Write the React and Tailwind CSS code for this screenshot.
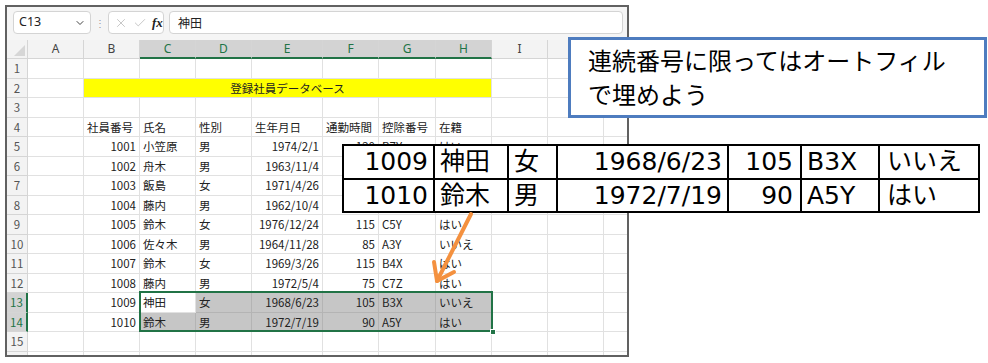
import React from 'react';
import { ChevronDown, X, Check } from 'lucide-react';

const WIDTHS = ['w-[56px]', 'w-[56px]', 'w-[56px]', 'w-[56px]', 'w-[71px]', 'w-[56px]', 'w-[57px]', 'w-[56px]', 'w-[56px]', 'w-[56px]'];
const LETTERS = ['A', 'B', 'C', 'D', 'E', 'F', 'G', 'H', 'I', 'J'];
// right aligned columns (B, E, F)
const RIGHT = [false, true, false, false, true, true, false, false, false, false];

const data = {
  4: ['社員番号', '氏名', '性別', '生年月日', '通勤時間', '控除番号', '在籍'],
  5: [1001, '小笠原', '男', '1974/2/1', 120, 'B7Y', 'はい'],
  6: [1002, '舟木', '男', '1963/11/4', 90, 'A2X', 'いいえ'],
  7: [1003, '飯島', '女', '1971/4/26', 60, 'C3Y', 'はい'],
  8: [1004, '藤内', '男', '1962/10/4', 100, 'B1Z', 'はい'],
  9: [1005, '鈴木', '女', '1976/12/24', 115, 'C5Y', 'はい'],
  10: [1006, '佐々木', '男', '1964/11/28', 85, 'A3Y', 'いいえ'],
  11: [1007, '鈴木', '女', '1969/3/26', 115, 'B4X', 'はい'],
  12: [1008, '藤内', '男', '1972/5/4', 75, 'C7Z', 'はい'],
  13: [1009, '神田', '女', '1968/6/23', 105, 'B3X', 'いいえ'],
  14: [1010, '鈴木', '男', '1972/7/19', 90, 'A5Y', 'はい'],
};

const overlay = [
  ['1009', '神田', '女', '1968/6/23', '105', 'B3X', 'いいえ'],
  ['1010', '鈴木', '男', '1972/7/19', '90', 'A5Y', 'はい'],
];
const OV_W = ['w-[89px] text-right pr-[5px]', 'w-[72px] pl-[5px]', 'w-[47px] pl-[5px]', 'w-[169px] text-right pr-[5px]', 'w-[71px] text-right pr-[7px]', 'w-[76px] pl-[5px]', 'w-[98px] pl-[7px]'];

function RowHeader({ n }) {
  const sel = n === 13 || n === 14;
  return (
    <div
      className={
        'w-[21px] shrink-0 border-b border-[#d5d5d5] text-center ' +
        (sel ? 'bg-[#d3d3d3] text-[#217346] border-r-2 border-r-[#217346]' : 'bg-[#f3f3f3] text-[#555] border-r')
      }
    >
      {n}
    </div>
  );
}

function SheetRow({ n }) {
  const vals = data[n];
  const sel = n === 13 || n === 14;

  if (n === 2) {
    return (
      <div className="flex h-[19.5px]">
        <RowHeader n={n} />
        <div className="w-[56px] shrink-0 border-r border-b border-[#e1e1e1]" />
        <div className="w-[408px] shrink-0 bg-[#ffff00] border-b border-r border-[#e1e1e1] text-center text-[#222]">登録社員データベース</div>
        <div className="w-[56px] shrink-0 border-r border-b border-[#e1e1e1]" />
        <div className="w-[56px] shrink-0 border-r border-b border-[#e1e1e1]" />
        <div className="flex-1 border-b border-[#e1e1e1]" />
      </div>
    );
  }

  return (
    <div className="flex h-[19.5px]">
      <RowHeader n={n} />
      {WIDTHS.map((w, i) => {
        const v = vals && i >= 1 && i <= 7 ? vals[i - 1] : '';
        const inSel = sel && i >= 2 && i <= 7;
        const active = n === 13 && i === 2;
        const right = n !== 4 && RIGHT[i];
        let tone = 'border-[#e1e1e1]';
        if (inSel && !active) tone = 'bg-[#c6c6c6] border-[#b4b4b4]';
        return (
          <div
            key={i}
            className={w + ' shrink-0 border-r border-b px-[3px] whitespace-nowrap text-[#222] ' + tone + (right ? ' text-right' : ' text-left')}
          >
            {v}
          </div>
        );
      })}
      <div className="flex-1 border-b border-[#e1e1e1]" />
    </div>
  );
}

export default function App() {
  const rows = Array.from({ length: 16 }, (_, i) => i + 1);

  return (
    <div className="relative w-[988px] h-[363px] bg-white overflow-hidden font-['Noto_Sans_CJK_JP',sans-serif]">
      {/* excel window */}
      <div className="ml-[5px] mt-[5px] w-[624px] h-[352px] border-2 border-[#616161] flex flex-col overflow-hidden bg-white">
        {/* formula bar */}
        <div className="h-[33px] shrink-0 bg-[#f5f5f5] flex items-start pt-[4px] pl-[6px]">
          <div className="w-[78px] h-[23px] bg-white border border-[#d4d4d4] rounded-[4px] flex items-center justify-between pl-[5px] pr-[4px] font-['Noto_Sans',sans-serif] text-[12.5px] text-[#222]">
            <span>C13</span>
            <ChevronDown size={12} strokeWidth={2} className="text-[#444]" />
          </div>
          <div className="w-[17px] h-[23px] flex items-center justify-center text-[#9a9a9a] text-[10px]">⋮</div>
          <div className="w-[56px] h-[23px] bg-white border border-[#d4d4d4] rounded-[4px] flex items-center pl-[5px] gap-[5px]">
            <X size={14} strokeWidth={1.3} className="text-[#b5b5b5]" />
            <Check size={14} strokeWidth={1.3} className="text-[#b5b5b5]" />
            <span className="font-['Liberation_Serif',serif] italic font-bold text-[13px] text-[#222] leading-none">fx</span>
          </div>
          <div className="ml-[5px] w-[454px] h-[23px] bg-white border border-[#d4d4d4] rounded-[4px] flex items-center pl-[8px] text-[12px] text-[#222]">
            神田
          </div>
        </div>

        {/* sheet */}
        <div className="relative flex-1 text-[11.5px] leading-[19px]">
          {/* column headers */}
          <div className="flex h-[19px] font-['Noto_Sans',sans-serif] text-[12px] leading-[18px]">
            <div className="w-[21px] shrink-0 bg-[#f3f3f3] border-r border-b border-[#d5d5d5] relative">
              <svg width="21" height="19" className="absolute left-0 top-0">
                <polygon points="18,5 18,16 7,16" fill="#d6d6d6" />
              </svg>
            </div>
            {WIDTHS.map((w, i) => {
              const sel = i >= 2 && i <= 7;
              return (
                <div
                  key={i}
                  className={
                    w + ' shrink-0 text-center border-r border-[#d5d5d5] ' +
                    (sel ? 'bg-[#d3d3d3] text-[#217346] border-b-2 border-b-[#217346]' : 'bg-[#f3f3f3] text-[#444] border-b')
                  }
                >
                  {LETTERS[i]}
                </div>
              );
            })}
            <div className="flex-1 bg-[#f3f3f3] border-b border-[#d5d5d5]" />
          </div>

          {rows.map((n) => (
            <SheetRow key={n} n={n} />
          ))}

          {/* selection C13:H14 */}
          <div className="absolute left-[132px] top-[251px] w-[354px] h-[41px] border-2 border-[#217346] pointer-events-none" />
          <div className="absolute left-[483px] top-[289px] w-[6px] h-[6px] bg-[#217346] border border-white pointer-events-none" />
        </div>
      </div>

      {/* callout */}
      <div className="absolute left-[568px] top-[37px] w-[419px] h-[81px] border-[3px] border-[#4e7cbf] bg-white pl-[17px] pt-[3px] text-[24px] leading-[34px] text-black">
        連続番号に限ってはオートフィル
        <br />
        で埋めよう
      </div>

      {/* enlarged rows */}
      <div className="absolute left-[342px] top-[144px] bg-black p-[2px] flex flex-col gap-[2px] text-[25px] text-black font-['DejaVu_Sans','Noto_Sans_CJK_JP',sans-serif]">
        {overlay.map((r, ri) => (
          <div key={ri} className={'flex gap-[2px] ' + (ri === 0 ? 'h-[32px]' : 'h-[31px]')}>
            {r.map((v, ci) => (
              <div key={ci} className={OV_W[ci] + ' bg-white leading-[32px] whitespace-nowrap'}>
                {v}
              </div>
            ))}
          </div>
        ))}
      </div>

      {/* arrow */}
      <svg width="988" height="363" className="absolute left-0 top-0 pointer-events-none">
        <g stroke="#f4913f" strokeWidth="4" strokeLinecap="round" strokeLinejoin="round" fill="none">
          <line x1="471" y1="214" x2="437" y2="281" />
          <polyline points="434,262 437,281 454,272" />
        </g>
      </svg>
    </div>
  );
}
